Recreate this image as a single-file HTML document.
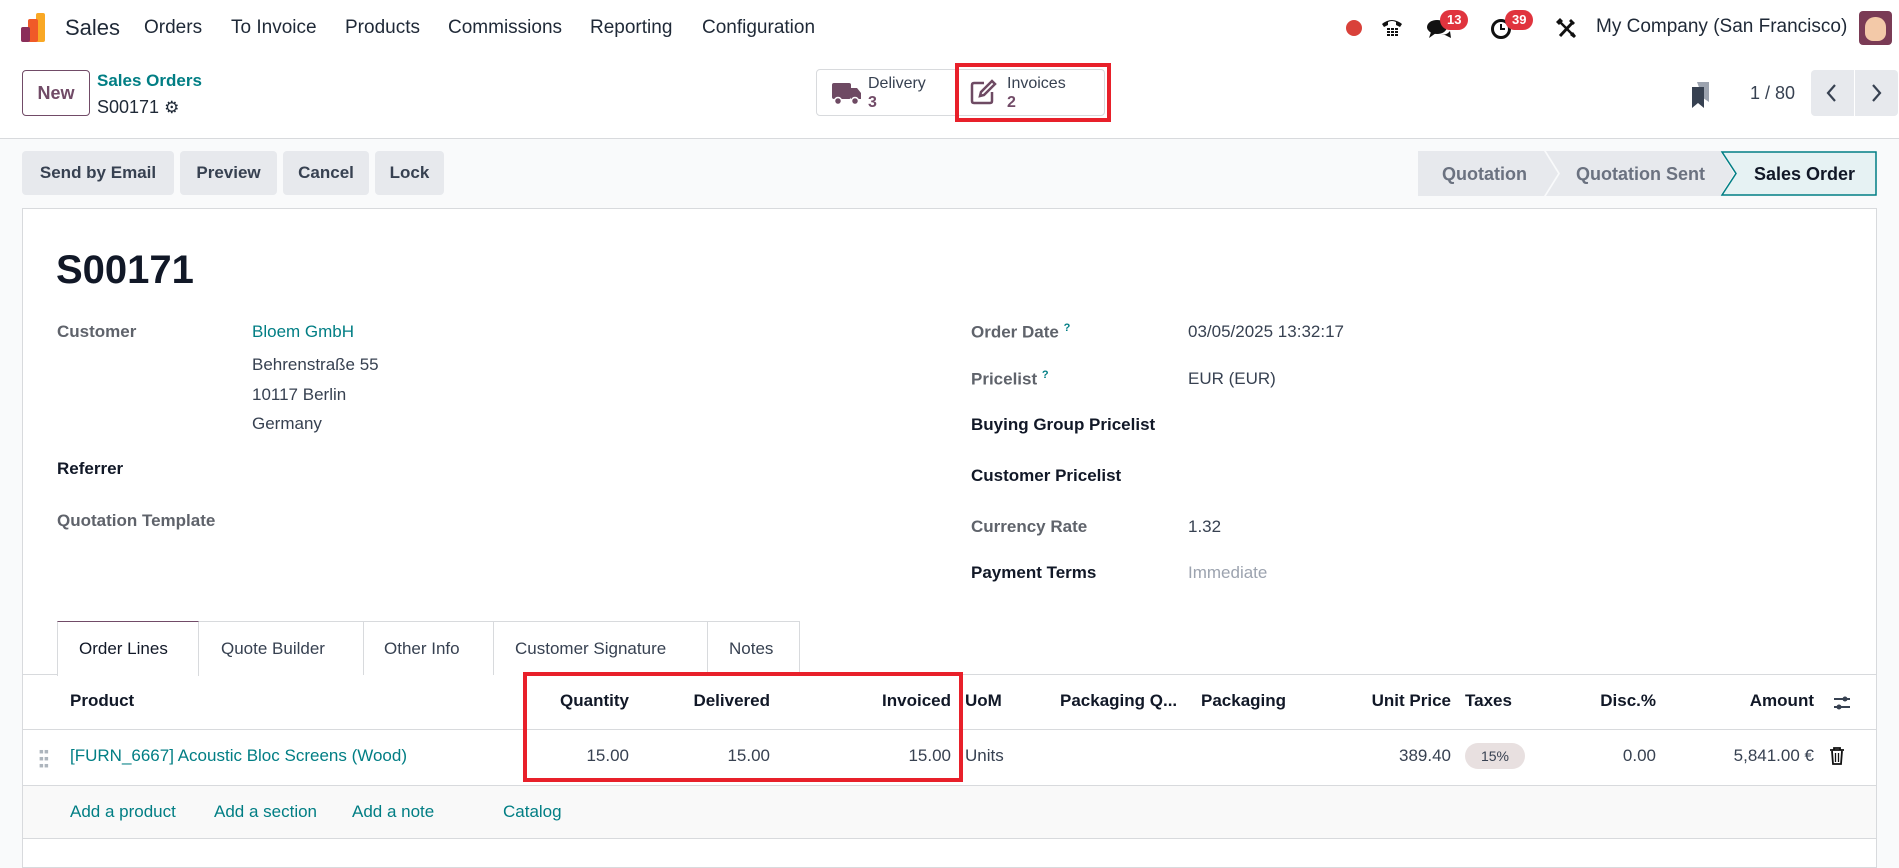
<!DOCTYPE html>
<html><head><meta charset="utf-8">
<style>
*{box-sizing:border-box;margin:0;padding:0}
body{width:1899px;height:854px;overflow:hidden;font-family:"Liberation Sans",sans-serif;font-size:17px;color:#374151;background:#f9fafb;position:relative}
.a{position:absolute;white-space:nowrap}
.nav{position:absolute;left:0;top:0;width:1899px;height:56px;background:#fff}
.cp{position:absolute;left:0;top:56px;width:1899px;height:83px;background:#fff;border-bottom:1px solid #d8dadd}
.btn{position:absolute;background:#e7e9ed;border-radius:4px;font-weight:bold;color:#374151;text-align:center;line-height:44px;height:44px;top:151px}
.teal{color:#017e84}
.lbl{color:#5f636b;font-weight:bold}
.blk{color:#111827;font-weight:bold}
.th{position:absolute;top:691px;font-weight:bold;color:#111827}
.td{position:absolute;top:746px}
</style></head><body>
<div class="nav">
  <svg class="a" style="left:20px;top:13px" width="30" height="30" viewBox="0 0 30 30"><rect x="16" y="0" width="9" height="29" rx="2" fill="#f9a825"/><rect x="8" y="6" width="10" height="23" rx="2" fill="#f05a28"/><rect x="1" y="14" width="9" height="15" rx="2" fill="#8b2e5a"/></svg>
  <div class="a" style="left:65px;top:15px;font-size:22px;color:#1f2937">Sales</div>
  <div class="a" style="left:144px;top:17px;font-size:19px;color:#1f2937">Orders</div>
  <div class="a" style="left:231px;top:17px;font-size:19px;color:#1f2937">To Invoice</div>
  <div class="a" style="left:345px;top:17px;font-size:19px;color:#1f2937">Products</div>
  <div class="a" style="left:448px;top:17px;font-size:19px;color:#1f2937">Commissions</div>
  <div class="a" style="left:590px;top:17px;font-size:19px;color:#1f2937">Reporting</div>
  <div class="a" style="left:702px;top:17px;font-size:19px;color:#1f2937">Configuration</div>
  <div class="a" style="left:1346px;top:20px;width:16px;height:16px;border-radius:50%;background:#d9413a"></div>
  <svg class="a" style="left:1381px;top:16px" width="22" height="22" viewBox="0 0 22 22"><path d="M1 8 Q11 0 21 8 L19 11 L15 9 L15 6 Q11 4 7 6 L7 9 L3 11Z" fill="#111"/><g fill="#111"><rect x="6" y="12" width="3" height="2"/><rect x="10" y="12" width="3" height="2"/><rect x="14" y="12" width="3" height="2"/><rect x="6" y="15" width="3" height="2"/><rect x="10" y="15" width="3" height="2"/><rect x="14" y="15" width="3" height="2"/><rect x="6" y="18" width="3" height="2"/><rect x="10" y="18" width="3" height="2"/><rect x="14" y="18" width="3" height="2"/></g></svg>
  <svg class="a" style="left:1427px;top:18px" width="26" height="22" viewBox="0 0 26 22"><ellipse cx="10" cy="9" rx="10" ry="7" fill="#111"/><path d="M4 14 L2 20 L9 15Z" fill="#111"/><path d="M14 17 Q20 17 23 13 L24 20 L18 17Z" fill="#111"/></svg>
  <div class="a" style="left:1440px;top:10px;height:20px;padding:0 7px;border-radius:10px;background:#e0343e;color:#fff;font-size:13px;font-weight:bold;line-height:20px">13</div>
  <svg class="a" style="left:1490px;top:17px" width="24" height="24" viewBox="0 0 24 24"><circle cx="11" cy="12" r="8.5" fill="none" stroke="#111" stroke-width="3"/><path d="M11 7 V12 H15" fill="none" stroke="#111" stroke-width="2"/></svg>
  <div class="a" style="left:1505px;top:10px;height:20px;padding:0 7px;border-radius:10px;background:#e0343e;color:#fff;font-size:13px;font-weight:bold;line-height:20px">39</div>
  <svg class="a" style="left:1555px;top:17px" width="22" height="22" viewBox="0 0 22 22"><path d="M5 19 L18 5" stroke="#111" stroke-width="3"/><path d="M16 2 L20 6 L18 8 L14 4Z" fill="#111"/><path d="M4 4 L18 18" stroke="#111" stroke-width="2.5"/><path d="M1 5 L5 1 L8 4 L4 8Z" fill="#111"/><path d="M15 18 L18 15 L21 19 L19 21Z" fill="#111"/></svg>
  <div class="a" style="left:1596px;top:16px;font-size:19px;color:#1f2937">My Company (San Francisco)</div>
  <div class="a" style="left:1859px;top:11px;width:33px;height:34px;border-radius:4px;background:#7a3b55"><div style="margin:6px 6px;width:21px;height:24px;border-radius:10px 10px 8px 8px;background:#f3c9a8"></div></div>
</div>
<div class="cp">
  <div class="a" style="left:22px;top:14px;width:68px;height:46px;border:1px solid #714b67;border-radius:4px;color:#714b67;font-weight:bold;text-align:center;line-height:44px;font-size:18px">New</div>
  <div class="a teal" style="left:97px;top:15px;font-weight:bold">Sales Orders</div>
  <div class="a" style="left:97px;top:41px;font-size:18px;color:#1f2937">S00171 <span style="font-size:17px">⚙</span></div>
  <div class="a" style="left:816px;top:13px;width:289px;height:47px;border:1px solid #d8dadd;border-radius:4px;background:#fff"></div>
  <div class="a" style="left:957px;top:13px;width:1px;height:47px;background:#d8dadd"></div>
  <svg class="a" style="left:832px;top:24px" width="30" height="26" viewBox="0 0 30 26"><rect x="0" y="3" width="19" height="16" rx="2" fill="#6e4a63"/><path d="M19 8 H25 L29 13 V19 H19Z" fill="#6e4a63"/><circle cx="6" cy="21" r="3.5" fill="#6e4a63" stroke="#fff" stroke-width="1.5"/><circle cx="23" cy="21" r="3.5" fill="#6e4a63" stroke="#fff" stroke-width="1.5"/></svg>
  <div class="a" style="left:868px;top:18px;font-size:16px;line-height:19px;color:#374151">Delivery<br><b style="color:#714b67">3</b></div>
  <svg class="a" style="left:970px;top:23px" width="28" height="26" viewBox="0 0 28 26"><path d="M14 4 H4 Q2 4 2 6 V22 Q2 24 4 24 H20 Q22 24 22 22 V13" fill="none" stroke="#6e4a63" stroke-width="2.5"/><path d="M10 17 L11 13 L22 2 L25 5 L14 16Z" fill="none" stroke="#6e4a63" stroke-width="2.5"/></svg>
  <div class="a" style="left:1007px;top:18px;font-size:16px;line-height:19px;color:#374151">Invoices<br><b style="color:#714b67">2</b></div>
  <div class="a" style="left:955px;top:7px;width:156px;height:59px;border:4px solid #e8202a"></div>
  <svg class="a" style="left:1690px;top:26px" width="22" height="26" viewBox="0 0 22 26"><path d="M7 0 H19 V20 L13 16 Z" fill="#9ca3af"/><path d="M2 5 H14 V26 L8 21 L2 26Z" fill="#374151"/></svg>
  <div class="a" style="left:1750px;top:27px;font-size:18px;color:#374151">1 / 80</div>
  <div class="a" style="left:1811px;top:14px;width:43px;height:46px;background:#e7e9ed;border-radius:4px 0 0 4px"></div>
  <div class="a" style="left:1855px;top:14px;width:43px;height:46px;background:#e7e9ed;border-radius:0 4px 4px 0"></div>
  <svg class="a" style="left:1824px;top:27px" width="16" height="20" viewBox="0 0 16 20"><path d="M11 2 L4 10 L11 18" fill="none" stroke="#374151" stroke-width="2.2"/></svg>
  <svg class="a" style="left:1868px;top:27px" width="16" height="20" viewBox="0 0 16 20"><path d="M5 2 L12 10 L5 18" fill="none" stroke="#374151" stroke-width="2.2"/></svg>
</div>
<div class="btn" style="left:22px;width:152px">Send by Email</div>
<div class="btn" style="left:180px;width:97px">Preview</div>
<div class="btn" style="left:283px;width:86px">Cancel</div>
<div class="btn" style="left:375px;width:69px">Lock</div>
<svg class="a" style="left:1418px;top:151px" width="460" height="45" viewBox="0 0 460 45">
<path d="M0 0 H126 L140 22.5 L126 45 H0Z" fill="#e7e9ed"/>
<path d="M128 0 H302 L316 22.5 L302 45 H128 L142 22.5Z" fill="#e7e9ed"/>
<path d="M304 1 H458 V44 H304 L318 22.5Z" fill="#e6f2f3" stroke="#017e84" stroke-width="1.5"/>
<text x="24" y="29" font-family="Liberation Sans" font-size="18" font-weight="bold" fill="#6b7280">Quotation</text>
<text x="158" y="29" font-family="Liberation Sans" font-size="18" font-weight="bold" fill="#6b7280">Quotation Sent</text>
<text x="336" y="29" font-family="Liberation Sans" font-size="18" font-weight="bold" fill="#111827">Sales Order</text>
</svg>
<div class="a" style="left:22px;top:208px;width:1855px;height:660px;background:#fff;border:1px solid #d8dadd"></div>
<div class="a" style="left:56px;top:248px;font-size:40px;font-weight:bold;color:#111827">S00171</div>
<div class="a lbl" style="left:57px;top:322px">Customer</div>
<div class="a teal" style="left:252px;top:322px">Bloem GmbH</div>
<div class="a" style="left:252px;top:350px;line-height:29.5px;color:#374151">Behrenstraße 55<br>10117 Berlin<br>Germany</div>
<div class="a blk" style="left:57px;top:459px">Referrer</div>
<div class="a lbl" style="left:57px;top:511px">Quotation Template</div>
<div class="a lbl" style="left:971px;top:322px">Order Date <sup class="teal" style="font-size:11px">?</sup></div>
<div class="a" style="left:1188px;top:322px">03/05/2025 13:32:17</div>
<div class="a lbl" style="left:971px;top:369px">Pricelist <sup class="teal" style="font-size:11px">?</sup></div>
<div class="a" style="left:1188px;top:369px">EUR (EUR)</div>
<div class="a blk" style="left:971px;top:415px">Buying Group Pricelist</div>
<div class="a blk" style="left:971px;top:466px">Customer Pricelist</div>
<div class="a lbl" style="left:971px;top:517px">Currency Rate</div>
<div class="a" style="left:1188px;top:517px">1.32</div>
<div class="a blk" style="left:971px;top:563px">Payment Terms</div>
<div class="a" style="left:1188px;top:563px;color:#9ca3af">Immediate</div>
<div class="a" style="left:23px;top:674px;width:1853px;height:1px;background:#d8dadd"></div>
<div class="a" style="left:57px;top:621px;width:743px;height:54px;border:1px solid #d8dadd;border-bottom:none;background:#fff"></div>
<div class="a" style="left:57px;top:621px;width:142px;height:55px;background:#fff;border-left:1px solid #d8dadd;border-right:1px solid #d8dadd;border-top:1px solid #714b67"></div>
<div class="a" style="left:363px;top:621px;width:1px;height:54px;background:#d8dadd"></div>
<div class="a" style="left:493px;top:621px;width:1px;height:54px;background:#d8dadd"></div>
<div class="a" style="left:707px;top:621px;width:1px;height:54px;background:#d8dadd"></div>
<div class="a" style="left:79px;top:639px;color:#111827">Order Lines</div>
<div class="a" style="left:221px;top:639px">Quote Builder</div>
<div class="a" style="left:384px;top:639px">Other Info</div>
<div class="a" style="left:515px;top:639px">Customer Signature</div>
<div class="a" style="left:729px;top:639px">Notes</div>
<div class="th" style="left:70px">Product</div>
<div class="th" style="right:1270px">Quantity</div>
<div class="th" style="right:1129px">Delivered</div>
<div class="th" style="right:948px">Invoiced</div>
<div class="th" style="left:965px">UoM</div>
<div class="th" style="left:1060px">Packaging Q...</div>
<div class="th" style="left:1201px">Packaging</div>
<div class="th" style="right:448px">Unit Price</div>
<div class="th" style="left:1465px">Taxes</div>
<div class="th" style="right:243px">Disc.%</div>
<div class="th" style="right:85px">Amount</div>
<svg class="a" style="left:1832px;top:693px" width="20" height="20" viewBox="0 0 20 20"><path d="M2 6 H18 M2 14 H18" stroke="#374151" stroke-width="2"/><circle cx="13" cy="6" r="2.5" fill="#374151"/><circle cx="7" cy="14" r="2.5" fill="#374151"/></svg>
<div class="a" style="left:23px;top:729px;width:1853px;height:1px;background:#d8dadd"></div>
<div class="td" style="left:39px;color:#adb5bd;font-size:14px;line-height:7px;top:748px">▪▪<br>▪▪<br>▪▪</div>
<div class="td teal" style="left:70px">[FURN_6667] Acoustic Bloc Screens (Wood)</div>
<div class="td" style="right:1270px">15.00</div>
<div class="td" style="right:1129px">15.00</div>
<div class="td" style="right:948px">15.00</div>
<div class="td" style="left:965px">Units</div>
<div class="td" style="right:448px">389.40</div>
<div class="a" style="left:1465px;top:743px;width:60px;height:26px;border-radius:13px;background:#e8e0e0;text-align:center;line-height:26px;font-size:14px">15%</div>
<div class="td" style="right:243px">0.00</div>
<div class="td" style="right:85px">5,841.00 €</div>
<svg class="a" style="left:1829px;top:747px" width="16" height="18" viewBox="0 0 16 18"><path d="M1 3 H15 M5 3 V1 H11 V3 M3 4 L4 17 H12 L13 4" fill="none" stroke="#111" stroke-width="1.8"/><path d="M6.5 6 V15 M9.5 6 V15" stroke="#111" stroke-width="1.3"/></svg>
<div class="a" style="left:23px;top:785px;width:1853px;height:54px;background:#f9f9f9;border-top:1px solid #d8dadd;border-bottom:1px solid #d8dadd"></div>
<div class="a teal" style="left:70px;top:802px">Add a product</div>
<div class="a teal" style="left:214px;top:802px">Add a section</div>
<div class="a teal" style="left:352px;top:802px">Add a note</div>
<div class="a teal" style="left:503px;top:802px">Catalog</div>
<div class="a" style="left:523px;top:672px;width:440px;height:110px;border:4px solid #e8202a"></div>
</body></html>
